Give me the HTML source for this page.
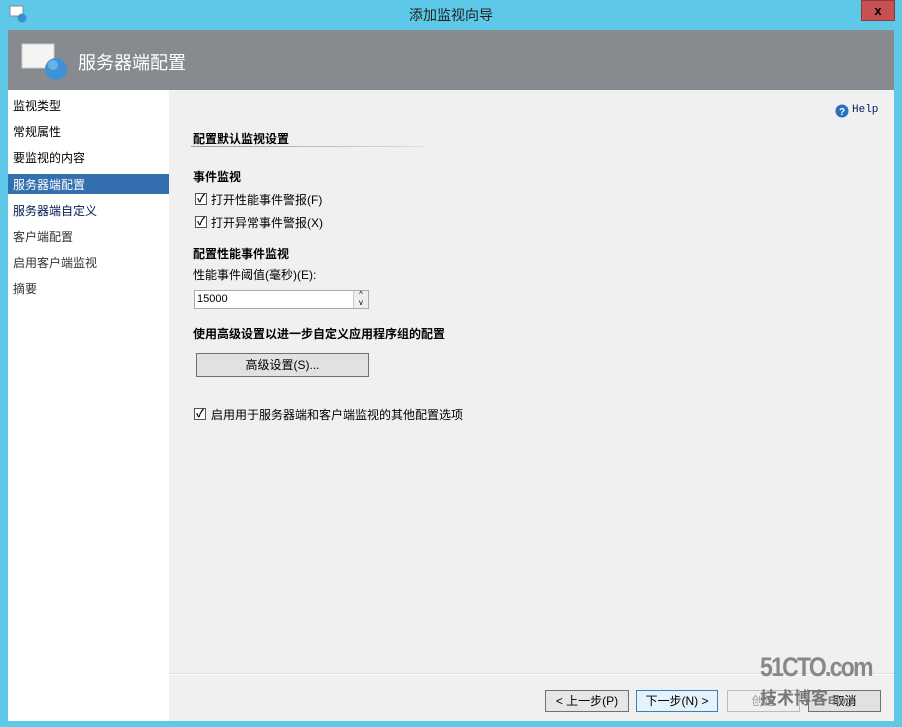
<!DOCTYPE html>
<html><head><meta charset="utf-8"><style>
*{margin:0;padding:0;box-sizing:border-box}
body{width:902px;height:727px;background:#5ec8e8;font-family:"Liberation Sans","Noto Sans CJK SC",sans-serif;font-size:12px;color:#000;position:relative;overflow:hidden}
.a{position:absolute}
.title{left:0;top:0;width:902px;height:30px;text-align:center;line-height:30px;font-size:14px;color:#222}
.close{left:861px;top:0;width:34px;height:21px;background:#c75050;border:1px solid #8a3a3a;color:#000;font-weight:bold;font-size:13px;text-align:center;line-height:19px}
.hdr{left:8px;top:30px;width:886px;height:60px;background:#878a8f}
.hdr span{position:absolute;left:70px;top:19px;font-size:18px;color:#fff}
.left{left:8px;top:90px;width:161px;height:631px;background:#fff}
.main{left:169px;top:90px;width:725px;height:631px;background:#f0f0f0}
.nav{position:absolute;left:5px;font-size:12px}
.cb{position:absolute;width:12px;height:12px;border:1px solid #555;background:#fff;font-size:11px;line-height:10px;text-align:center;font-weight:bold}
.btn{position:absolute;height:22px;border:1px solid #707070;background:#e1e1e1;text-align:center;line-height:20px;font-size:12px}
b{font-weight:bold}
</style></head><body>
<div class="a title">添加监视向导</div>
<svg class="a" style="left:9px;top:5px" width="18" height="18"><rect x="1" y="1" width="13" height="10" fill="#fff" stroke="#888"/><circle cx="13" cy="13" r="4.5" fill="#3a8fd0"/></svg>
<div class="a close">x</div>
<div class="a hdr"><svg style="position:absolute;left:12px;top:12px" width="50" height="40"><rect x="2" y="2" width="32" height="24" fill="#f4f4f4" stroke="#ccc"/><circle cx="36" cy="27" r="11" fill="#3d93d4"/><circle cx="33" cy="23" r="5" fill="#8cc8f0" opacity=".6"/></svg><span>服务器端配置</span></div>
<div class="a left">
<div class="nav" style="top:7px">监视类型</div>
<div class="nav" style="top:33px">常规属性</div>
<div class="nav" style="top:59px">要监视的内容</div>
<div style="position:absolute;left:0;top:84px;width:161px;height:20px;background:#3470b0"></div>
<div class="nav" style="top:86px;color:#fff">服务器端配置</div>
<div class="nav" style="top:112px;color:#001a50">服务器端自定义</div>
<div class="nav" style="top:138px;color:#333">客户端配置</div>
<div class="nav" style="top:164px;color:#333">启用客户端监视</div>
<div class="nav" style="top:190px;color:#333">摘要</div>
</div>
<div class="a main">
<svg style="position:absolute;left:666px;top:14px" width="14" height="14"><circle cx="7" cy="7" r="6.5" fill="#2a6fc0"/><text x="7" y="11" font-size="10" fill="#fff" text-anchor="middle" font-weight="bold" font-family="Liberation Sans">?</text></svg>
<div style="position:absolute;left:683px;top:14px;font-family:'Liberation Mono',monospace;font-size:11px;color:#002060">Help</div>
<div style="position:absolute;left:24px;top:40px"><b>配置默认监视设置</b></div>
<div style="position:absolute;left:22px;top:56px;width:232px;height:1px;background:linear-gradient(90deg,#999,#ddd)"></div>
<div style="position:absolute;left:24px;top:78px"><b>事件监视</b></div>
<div class="cb" style="left:26px;top:103px">✓</div><div style="position:absolute;left:42px;top:101px">打开性能事件警报(F)</div>
<div class="cb" style="left:26px;top:126px">✓</div><div style="position:absolute;left:42px;top:124px">打开异常事件警报(X)</div>
<div style="position:absolute;left:24px;top:155px"><b>配置性能事件监视</b></div>
<div style="position:absolute;left:24px;top:176px">性能事件阈值(毫秒)(E):</div>
<div style="position:absolute;left:25px;top:200px;width:175px;height:19px;background:#fff;border:1px solid #aaa;padding-left:2px;line-height:17px;font-size:11px">15000</div>
<div style="position:absolute;left:184px;top:201px;width:15px;height:17px;background:#eee;border-left:1px solid #ccc;font-size:8px;line-height:8px;text-align:center">^<br>v</div>
<div style="position:absolute;left:24px;top:235px"><b>使用高级设置以进一步自定义应用程序组的配置</b></div>
<div class="btn" style="left:196px;top:353px;width:173px;height:24px;line-height:22px;position:fixed">高级设置(S)...</div>
<div class="cb" style="left:25px;top:318px">✓</div><div style="position:absolute;left:42px;top:316px">启用用于服务器端和客户端监视的其他配置选项</div>
<div style="position:absolute;left:0;top:583px;width:725px;height:1px;background:#ddd"></div>
<div style="position:absolute;left:0;top:584px;width:725px;height:1px;background:#fff"></div>
</div>
<div class="btn" style="left:545px;top:690px;width:84px;background:#e6e6e6">&lt; 上一步(P)</div>
<div class="btn" style="left:636px;top:690px;width:82px;border-color:#3c7fb1;background:#e5f1fb">下一步(N) &gt;</div>
<div class="btn" style="left:727px;top:690px;width:73px;border-color:#bbb;color:#999;background:#f0f0f0">创建</div>
<div class="btn" style="left:808px;top:690px;width:73px">取消</div>
<div class="a" style="left:760px;top:652px;font-size:27px;font-weight:bold;color:#888;letter-spacing:-2px;transform:scaleX(.85);transform-origin:left">51CTO.com</div>
<div class="a" style="left:760px;top:684px;font-size:17px;font-weight:bold;color:#777">技术博客<span style="font-size:11px">Blog</span></div>
</body></html>
